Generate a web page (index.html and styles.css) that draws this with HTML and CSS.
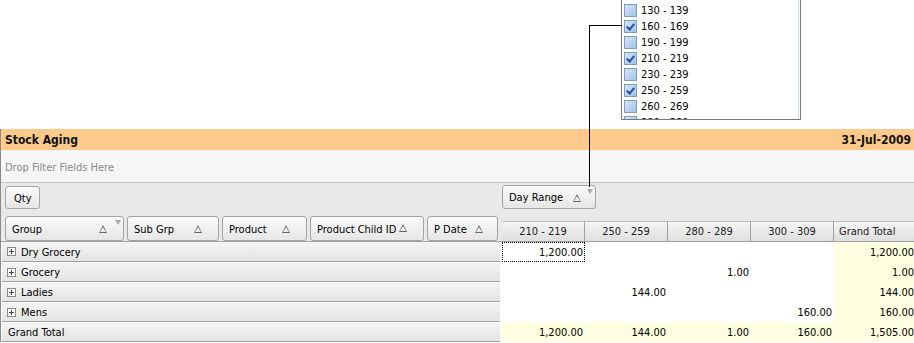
FILE: index.html
```html
<!DOCTYPE html>
<html lang="en">
<head>
    <meta charset="utf-8" />
    <title>Stock Aging</title>
    <link rel="stylesheet" href="styles.css">
</head>
<body>
    <div class="top">
        <div class="popup">
            <div class="item"><span class="cb"></span>130 - 139</div>
            <div class="item"><span class="cb on"></span>160 - 169</div>
            <div class="item"><span class="cb"></span>190 - 199</div>
            <div class="item"><span class="cb on"></span>210 - 219</div>
            <div class="item"><span class="cb"></span>230 - 239</div>
            <div class="item"><span class="cb on"></span>250 - 259</div>
            <div class="item"><span class="cb"></span>260 - 269</div>
            <div class="item"><span class="cb"></span>280 - 289</div>
            <div class="scroll"></div>
        </div>
        <div class="connector"></div>
    </div>

    <div class="panel">
        <div class="title">
            <span>Stock Aging</span>
            <span>31-Jul-2009</span>
        </div>
        <div class="filter">Drop Filter Fields Here</div>

        <div class="area">
            <div class="bar">
                <div class="left">
                    <div class="field qty">Qty</div>
                </div>
                <div class="right">
                    <div class="field dayrange">Day Range <span class="sort"></span><span class="funnel"></span></div>
                </div>
            </div>

            <div class="heads">
                <div class="left fields">
                    <div class="field w-group">Group <span class="sort"></span><span class="funnel"></span></div>
                    <div class="field w-subgrp">Sub Grp <span class="sort"></span></div>
                    <div class="field w-product">Product <span class="sort"></span></div>
                    <div class="field w-child">Product Child ID <span class="sort"></span></div>
                    <div class="field w-pdate">P Date <span class="sort"></span></div>
                </div>
                <div class="right cols">
                    <div class="col">210 - 219</div>
                    <div class="col">250 - 259</div>
                    <div class="col">280 - 289</div>
                    <div class="col">300 - 309</div>
                    <div class="col total">Grand Total</div>
                </div>
            </div>
        </div>

        <div class="rows">
            <div class="row">
                <div class="rh"><span class="plus"></span>Dry Grocery</div>
                <div class="cell focus">1,200.00</div><div class="cell"></div><div class="cell"></div><div class="cell"></div><div class="cell gt">1,200.00</div>
            </div>
            <div class="row">
                <div class="rh"><span class="plus"></span>Grocery</div>
                <div class="cell"></div><div class="cell"></div><div class="cell">1.00</div><div class="cell"></div><div class="cell gt">1.00</div>
            </div>
            <div class="row">
                <div class="rh"><span class="plus"></span>Ladies</div>
                <div class="cell"></div><div class="cell">144.00</div><div class="cell"></div><div class="cell"></div><div class="cell gt">144.00</div>
            </div>
            <div class="row">
                <div class="rh"><span class="plus"></span>Mens</div>
                <div class="cell"></div><div class="cell"></div><div class="cell"></div><div class="cell">160.00</div><div class="cell gt">160.00</div>
            </div>
            <div class="row grand">
                <div class="rh">Grand Total</div>
                <div class="cell gt">1,200.00</div><div class="cell gt">144.00</div><div class="cell gt">1.00</div><div class="cell gt">160.00</div><div class="cell gt">1,505.00</div>
            </div>
        </div>
    </div>
</body>
</html>
```
FILE: styles.css
```css
body {
    margin: 0;
    width: 914px;
    height: 343px;
    overflow: hidden;
    background-color: #fff;
    font-family: "DejaVu Sans Condensed", "DejaVu Sans", sans-serif;
    font-size: 11px;
    color: #000;
}

/* popup list above the grid */
.top {
    position: relative;
    height: 128px;
}

.popup {
    position: absolute;
    left: 621px;
    top: 0;
    width: 178px;
    height: 119px;
    border: 1px solid #7a7a7a;
    border-top: none;
    background-color: #fff;
    overflow: hidden;
}

.scroll {
    position: absolute;
    right: 1px;
    top: 0;
    bottom: 0;
    width: 1px;
    background-color: #c8d8ee;
}

.item {
    display: flex;
    align-items: center;
    height: 16px;
    padding-left: 2px;
}

.item:first-child {
    margin-top: 2px;
}

.cb {
    width: 11px;
    height: 11px;
    margin-right: 4px;
    border: 1px solid #7f9db9;
    background: linear-gradient(135deg, #d6e5f8, #a3c0ea);
    position: relative;
}

.cb.on::after {
    content: "";
    position: absolute;
    left: 3px;
    top: 1px;
    width: 3px;
    height: 6px;
    border: solid #1f4fa8;
    border-width: 0 2px 2px 0;
    transform: rotate(40deg);
}

.connector {
    position: absolute;
    left: 589px;
    top: 25px;
    width: 32px;
    height: 161px;
    border-top: 1px solid #000;
    border-left: 1px solid #000;
    z-index: 2;
}

/* main panel */
.panel {
    border-left: 1px solid #8a8a8a;
    width: 913px;
}

.title {
    display: flex;
    justify-content: space-between;
    align-items: center;
    height: 21px;
    margin-top: 1px;
    padding: 0 3px 0 4px;
    background-color: #fdca8c;
    font-size: 12px;
    font-weight: bold;
    color: #111;
}

.filter {
    height: 29px;
    padding: 3px 0 0 4px;
    line-height: 29px;
    background-color: #f6f6f6;
    border-bottom: 1px solid #c6c6c6;
    color: #8a8a8a;
}

.area {
    background-color: #e9e9e9;
}

.bar, .heads {
    display: flex;
}

.left {
    width: 501px;
    flex: none;
}

.right {
    flex: 1;
}

.bar {
    height: 30px;
}

.bar .left {
    padding: 3px 0 0 4px;
    box-sizing: border-box;
}

.bar .right {
    padding-top: 2px;
}

.field {
    display: inline-flex;
    align-items: center;
    box-sizing: border-box;
    height: 24px;
    padding: 1px 0 0 6px;
    border: 1px solid #a4a4a4;
    border-radius: 3px;
    background: linear-gradient(#fafafa, #e6e6e6);
    position: relative;
    white-space: nowrap;
}

.qty {
    width: 35px;
    height: 23px;
    padding-left: 8px;
}

.dayrange {
    width: 94px;
}

.sort {
    display: inline-block;
    width: 0;
    height: 0;
    position: absolute;
    top: 8px;
    right: 16px;
    border-left: 4px solid transparent;
    border-right: 4px solid transparent;
    border-bottom: 8px solid #666;
}

.sort::after {
    content: "";
    position: absolute;
    left: -3px;
    top: 2px;
    border-left: 3px solid transparent;
    border-right: 3px solid transparent;
    border-bottom: 5px solid #eee;
}

.dayrange .sort {
    right: 14px;
}

.funnel {
    position: absolute;
    right: 2px;
    top: 3px;
    border-left: 3px solid transparent;
    border-right: 3px solid transparent;
    border-top: 5px solid #aaa;
}

.fields {
    display: flex;
    gap: 3px;
    padding: 3px 0 1px 4px;
    box-sizing: border-box;
    height: 28px;
}

.fields .field {
    height: 25px;
}

.w-group { width: 119px; }
.w-subgrp { width: 92px; }
.w-product { width: 85px; }
.w-child { width: 114px; }
.w-pdate { width: 71px; }

.w-child .sort {
    position: relative;
    top: -1px;
    right: auto;
    margin-left: 3px;
}

.w-pdate .sort { right: 14px; }

.cols {
    display: flex;
    align-self: flex-end;
    overflow: hidden;
}

.col {
    flex: none;
    width: 82px;
    height: 19px;
    line-height: 20px;
    text-align: center;
    border-right: 1px solid #a0a0a0;
    border-top: 1px solid #c0c0c0;
    background: linear-gradient(#f5f5f5, #dedede);
    color: #222;
}

.col.total {
    width: 90px;
    text-align: left;
    padding-left: 5px;
    border-right: none;
}

/* data rows */
.rows {
    border-top: 1px solid #a0a0a0;
    overflow: hidden;
}

.row {
    display: flex;
    height: 20px;
}

.rh {
    flex: none;
    width: 498px;
    box-sizing: border-box;
    height: 20px;
    margin: 0 2px 0 1px;
    display: flex;
    align-items: center;
    padding: 1px 0 0 5px;
    border-top: 1px solid #fff;
    border-bottom: 1px solid #a0a0a0;
    background: linear-gradient(#f4f4f4, #e4e4e4);
}

.row:first-child .rh {
    border-top: none;
}

.plus {
    width: 7px;
    height: 7px;
    margin: -1px 5px 0 0;
    border: 1px solid #8a8a8a;
    background:
        linear-gradient(#444, #444) center / 5px 1px no-repeat,
        linear-gradient(#444, #444) center / 1px 5px no-repeat,
        #fff;
}

.cell {
    flex: none;
    width: 83px;
    box-sizing: border-box;
    height: 20px;
    line-height: 21px;
    text-align: right;
    padding-right: 2px;
    white-space: nowrap;
}

.cell.gt {
    background-color: #fefee0;
}

.cell:last-child {
    width: 82px;
}

.cell.focus {
    border: 1px dotted #000;
    line-height: 19px;
    padding-right: 1px;
    width: 83px;
}

.grand .rh {
    padding-left: 6px;
}
```
